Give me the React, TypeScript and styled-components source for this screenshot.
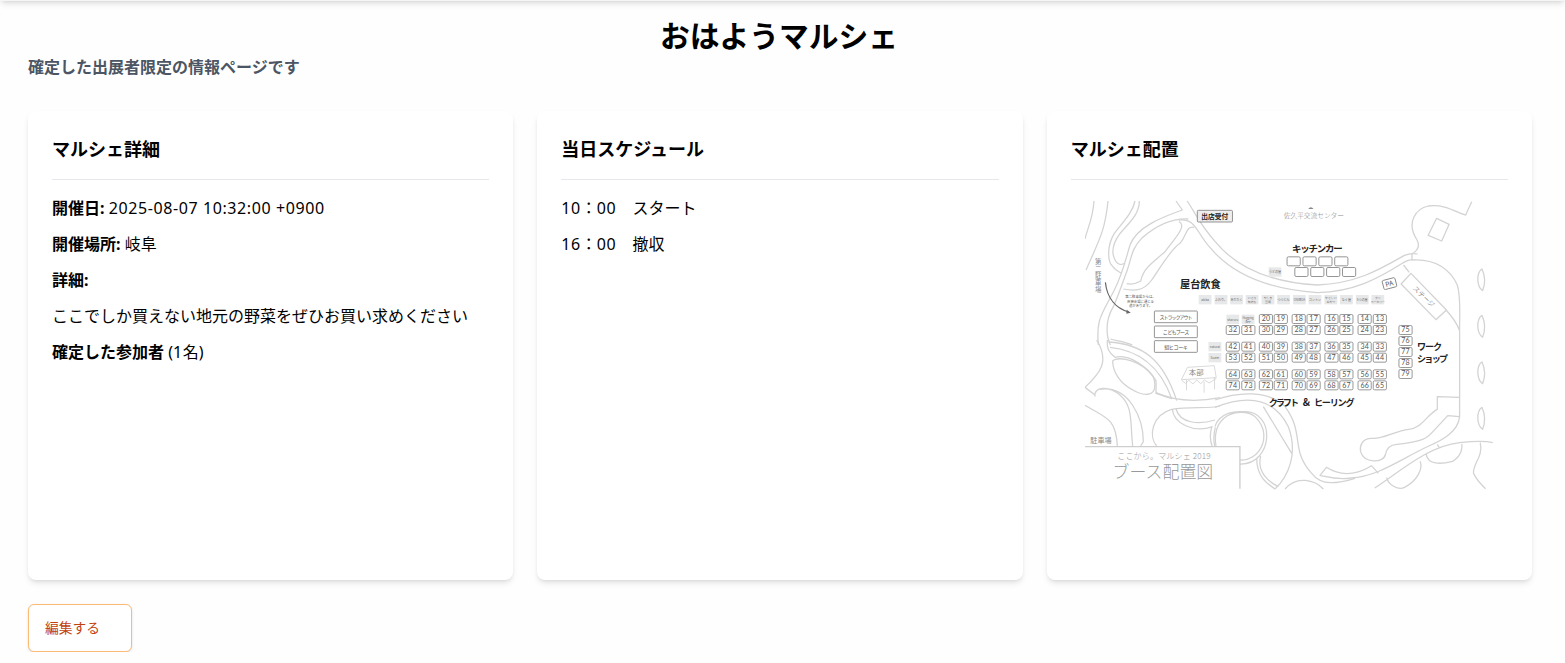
import React from "react";
import styled, { createGlobalStyle } from "styled-components";

const font = `"Noto Sans", "Noto Sans CJK JP", sans-serif`;
const Global = createGlobalStyle`
  * { box-sizing: border-box; }
  body { margin: 0; background: #fefefe; font-family: ${font}; color: #000; overflow: hidden; }
  h1, h2, p { margin: 0; }
`;
const HeaderEdge = styled.header`
  height: 21px;
  margin-top: -20px;
  background: #f5f5f5;
  box-shadow: 0 4px 6px -1px rgba(0, 0, 0, 0.1), 0 2px 4px -2px rgba(0, 0, 0, 0.1);
`;
const Screen = styled.div`
  display: flow-root;
`;
const Page = styled.main`
  padding: 15px 33px 0 28px;
`;
const Title = styled.h1`
  font: 700 29.75px/36px "Noto Sans CJK JP", sans-serif;
  text-align: center;
  padding-right: 2px;
`;
const Lead = styled.p`
  font: 700 16px/24px "Noto Sans CJK JP", sans-serif;
  color: #4b5563;
  margin-top: 2px;
`;
const Cards = styled.section`
  display: grid;
  grid-template-columns: repeat(3, 1fr);
  gap: 24px;
  height: 469px;
  margin: 33px 0 24px;
`;
const Card = styled.article`
  background: #fff;
  border-radius: 8px;
  padding: 23px 24px 24px;
  box-shadow: 0 4px 6px -1px rgba(0, 0, 0, 0.1), 0 2px 4px -2px rgba(0, 0, 0, 0.1);
`;
const CardTitle = styled.h2`
  font: 700 18px/28px "Noto Sans CJK JP", sans-serif;
  padding-bottom: 17px;
  border-bottom: 1px solid #e5e7eb;
  margin-bottom: 16px;
`;
const Row = styled.p`
  font-size: 16px;
  line-height: 24px;
  margin-bottom: 12px;
  white-space: nowrap;
`;
const Label = styled.strong`
  font-weight: 700;
`;
const Latin = styled.span`
  letter-spacing: 0.6px;
`;
const EditButton = styled.button`
  display: block;
  width: 104px;
  height: 48px;
  padding: 0 16px 2px;
  text-align: left;
  font: 400 13.75px/20px "Noto Sans CJK JP", sans-serif;
  color: #c2410c;
  background: #fff;
  border: 1px solid #fdba74;
  border-radius: 6px;
  box-shadow: 0 1px 3px rgba(0, 0, 0, 0.1), 0 1px 2px -1px rgba(0, 0, 0, 0.1);
`;
const MapSvg = styled.svg`
  display: block;
  width: 410px;
  height: 290px;
  margin: 20px auto 0 14px;
  font-family: "Noto Sans CJK JP", sans-serif;
  text-anchor: middle;
`;
const Lines = styled.g`
  fill: none;
  stroke: #d3d3d3;
  stroke-width: 3.8;
  stroke-linejoin: round;
`;

const columns = [600, 646, 698, 742, 795, 839, 892, 936, 990, 1035];
const boothRows: [number, string[]][] = [
  [657, ["", "", "20", "19", "18", "17", "16", "15", "14", "13"]],
  [690, ["32", "31", "30", "29", "28", "27", "26", "25", "24", "23"]],
  [740, ["42", "41", "40", "39", "38", "37", "36", "35", "34", "33"]],
  [773, ["53", "52", "51", "50", "49", "48", "47", "46", "45", "44"]],
  [823, ["64", "63", "62", "61", "60", "59", "58", "57", "56", "55"]],
  [856, ["74", "73", "72", "71", "70", "69", "68", "67", "66", "65"]],
];
const stalls: [number, number, string[]][] = [
  [518, 599, ["akiba"]],
  [565, 599, ["ふわり。"]],
  [611, 599, ["あだたく"]],
  [657, 599, ["いさり", "気持ち"]],
  [704, 599, ["やしま", "豆腐"]],
  [750, 599, ["つつじん"]],
  [797, 599, ["ONIBOA"]],
  [843, 599, ["コンミン"]],
  [890, 599, ["やさしい", "おやつ"]],
  [936, 599, ["なぐ屋"]],
  [983, 599, ["5つの屋"]],
  [1029, 599, ["クリ", "ベーカリー"]],
  [725, 516, ["うどの屋"]],
  [600, 658, ["sharuru"]],
  [645, 658, ["Hugging", "Bee"]],
  [547, 740, ["natural"]],
  [547, 773, ["Suzier"]],
];
const trucks = [
  [780, 484], [827, 484], [874, 484], [921, 484],
  [803, 516], [850, 516], [897, 516], [944, 516],
];

const Booth = ({ x, y, n }: { x: number; y: number; n: string }) => (
  <g>
    <rect x={x - 19.5} y={y - 13.5} width="39" height="27" rx="4" fill="#fff" stroke="#808080" strokeWidth="2.4" />
    {n && <text x={x} y={y + 7.5} fontSize="21" fill="#555" fontFamily="Lato" textLength="25">{n}</text>}
  </g>
);

const BoothMap = () => (
  <MapSvg viewBox="162.7 300 1213 870" preserveAspectRatio="none">
    <Lines transform="scale(.9862 1) translate(150 285)">
      <path d="M42 18C38 75 22 100 15 132M84 18C75 110 55 140 18 225" />
      <path d="M165 18C158 52 130 80 103 115C77 158 85 205 98 214C108 228 115 230 123 234" />
      <path d="M178 18C178 60 145 85 118 118C92 155 95 180 108 200C115 209 126 210 134 205" />
      <path d="M288 18L307 45C250 65 170 95 150 150C135 200 128 235 103 285C65 360 48 370 55 450" />
      <path d="M325 72C280 70 230 90 185 130C153 162 155 190 140 230C125 270 120 290 100 335C82 365 78 400 84 430L91 450" />
      <path d="M297 80C322 92 285 130 255 170C215 205 190 220 182 258C162 270 150 268 140 266" />
      <path d="M342 97C318 92 322 120 300 145C270 165 240 220 215 255C190 290 160 288 130 282" />
      <path d="M91 432C115 438 135 440 157 450" />
    </Lines>
    <Lines>
      <path d="M465 303C490 340 500 370 548 425C620 515 730 548 850 555C970 550 1040 505 1108 466Q1126 458 1147 462" />
      <path d="M440 360C492 355 490 395 533 443C600 525 710 568 850 578C960 575 1030 535 1098 492Q1120 478 1130 480C1200 475 1245 510 1264 555C1276 590 1270 650 1271 700V950C1267 995 1220 1020 1180 1038C1100 1075 1030 1130 950 1134C905 1140 880 1130 858 1126L877 1102C935 1140 990 1110 1010 1097L1031 1120" />
      <path d="M1130 480V462Q1158 445 1145 420C1110 365 1145 325 1178 318C1230 310 1268 342 1289 345Q1295 330 1307 305" />
      <path d="M1203 355L1240 373L1218 423L1178 406ZM1127 520L1232 630L1201 659L1098 552ZM1105 495L1122 517M1231 630Q1262 665 1270 690" />
      {[539, 679, 818, 955].map((y) => (
        <path key={y} d={`M1337 ${y - 33}C1320 ${y - 20} 1321 ${y + 20} 1339 ${y + 33}Q1352 ${y} 1337 ${y - 33}`} />
      ))}
      <path d="M1271 892L1205 890V928C1175 943 1160 985 1120 988C1080 993 1040 1020 1010 1015C982 1015 975 1038 978 1055C988 1090 1045 1090 1051 1065Q1056 1035 1085 1033C1140 1028 1170 1020 1187 1000L1236 947L1271 950" />
      <path d="M1020 1164C1100 1110 1180 1038 1271 1028Q1340 1020 1369 1028M1205 1033L1212 1045M1172 1063C1178 1095 1215 1093 1250 1084C1275 1070 1280 1045 1277 1032M1055 1133C1060 1155 1090 1172 1108 1162C1145 1143 1164 1105 1154 1084" />
      <path d="M1332 1028C1342 1070 1310 1090 1312 1120Q1325 1145 1348 1166" />
    </Lines>
    <Lines transform="scale(.9862 1) translate(150 720)">
      <path d="M50 0C90 65 60 100 15 142L45 165M15 196C80 235 108 235 112 318" />
      <path d="M45 170C40 140 85 135 120 165C160 200 150 245 158 318M60 148C150 135 190 240 190 305L182 318M230 318C205 290 215 225 275 208C330 198 385 208 420 198" />
      <path d="M82 0C80 28 88 38 105 52C150 40 205 85 228 122V160L275 176C240 75 170 30 90 22M85 6C190 12 250 60 290 182" />
      <path d="M98 63C115 45 190 65 220 110C240 175 190 170 155 148C120 130 98 95 98 63ZM228 158C280 182 340 188 420 173" />
      <path d="M277 207C280 250 340 280 398 260M288 207C300 250 355 255 405 240M395 262C388 285 390 300 396 318M406 262C400 285 400 300 404 318" />
    </Lines>
    <Lines transform="scale(.9862 1) translate(555 720)">
      <path d="M0 180C70 155 160 150 210 200C270 280 225 330 290 400C320 440 370 430 420 415" />
      <path d="M0 202C105 160 180 180 220 260C250 340 220 410 180 447M145 200L230 340" />
      <path d="M3 320C-15 210 95 200 125 235C175 290 130 365 75 360M75 372C175 375 185 210 85 215C10 210 0 260 0 260" />
      <path d="M125 355C125 410 155 430 180 447M137 348C125 395 160 425 190 440M210 447C245 405 300 420 325 447" />
    </Lines>
    <path d="M163 1040H621V1166" fill="none" stroke="#cecece" strokeWidth="4" />
    <path d="M466 802L545 797L551 833L448 839ZM463 839V871M515 845V878M546 833V868M448 840L460 850L470 841L482 852L493 840L505 851L516 840L530 849L551 835" fill="none" stroke="#d3d3d3" strokeWidth="2.5" />

    <g fill="#fff" stroke="#808080" strokeWidth="2.5">
      {trucks.map(([x, y]) => <rect key={`${x}-${y}`} x={x - 19.5} y={y - 13.5} width="39" height="27" rx="4" />)}
      {[650, 695, 739].map((y) => <rect key={y} x="368" y={y - 17} width="127" height="35" rx="2" />)}
      <rect x="495" y="331" width="104" height="35" rx="3" fill="#eee" />
      <rect x="1044" y="537" width="39" height="28" rx="4" transform="rotate(-15 1063 551)" />
    </g>
    {boothRows.map(([y, nums]) => nums.map((n, i) => n && <Booth key={n} x={columns[i]} y={y} n={n} />))}
    {["75", "76", "77", "78", "79"].map((n, i) => <Booth key={n} x={1111} y={690 + i * 33} n={n} />)}
    {stalls.map(([x, y, lines]) => (
      <g key={lines[0]}>
        <rect x={x - 19} y={y - 14} width="38" height="28" fill="#e7e8e9" />
        {lines.map((t, i) => (
          <text key={t} x={x} y={y + 4 + (lines.length > 1 ? i * 11 - 5 : 0)} fontSize={lines.length > 1 ? 8.5 : 9} fill="#666">{t}</text>
        ))}
      </g>
    ))}
    <g fill="#222" fontWeight="700">
      <text x="547" y="356" fontSize="20">出店受付</text>
      <text x="504" y="563" fontSize="30">屋台飲食</text>
      <text x="850" y="457" fontSize="28" textLength="150">キッチンカー</text>
      <text x="751" y="917" fontSize="27" textLength="90">クラフト</text>
      <text x="818" y="917" fontSize="29">&amp;</text>
      <text x="900" y="917" fontSize="27" textLength="120">ヒーリング</text>
      <text x="1182" y="751" fontSize="27" textLength="74">ワーク</text>
      <text x="1191" y="785" fontSize="27" textLength="92">ショップ</text>
    </g>
    <g fill="#555">
      <text x="432" y="657" fontSize="15" textLength="98">ストラックアウト</text>
      <text x="432" y="701" fontSize="15" textLength="78">こどもブース</text>
      <text x="432" y="746" fontSize="15" textLength="70">組ヒコーキ</text>
      <text x="1063" y="558" fontSize="20" transform="rotate(-15 1063 551)">PA</text>
      <g fontSize="10">
        <text x="327" y="594">第二駐車場からは、</text>
        <text x="327" y="608">直接会場に通じる</text>
        <text x="327" y="622">道があります。</text>
      </g>
    </g>
    <g fill="#888">
      <text x="840" y="355" fontSize="20" textLength="178" fontWeight="300">佐久平交流センター</text>
      <path d="M823 327Q831 316 839 327Z" />
      <text x="1165" y="597" fontSize="20" textLength="80" transform="rotate(44 1165 590)">ステージ</text>
      <text x="492" y="825" fontSize="22">本部</text>
      <text x="210" y="1029" fontSize="21">駐車場</text>
      {[..."第二駐車場"].map((c, i) => <text key={c} x="202" y={492 + i * 21} fontSize="19">{c}</text>)}
    </g>
    <g fill="#999">
      <text x="396" y="1078" fontSize="24" textLength="276" fontWeight="300">ここから。マルシェ 2019</text>
      <text x="393" y="1134" fontSize="50" textLength="298" fontWeight="300">ブース配置図</text>
    </g>
    <path d="M223 547C228 595 255 625 292 636" fill="none" stroke="#666" strokeWidth="3.5" />
    <path d="M298 638L286 629L285 641Z" fill="#666" />
  </MapSvg>
);

export default function App() {
  return (
    <Screen>
      <Global />
      <HeaderEdge />
      <Page>
        <Title>おはようマルシェ</Title>
        <Lead>確定した出展者限定の情報ページです</Lead>
        <Cards>
          <Card>
            <CardTitle>マルシェ詳細</CardTitle>
            <Row><Label>開催日:</Label> <Latin>2025-08-07 10:32:00 +0900</Latin></Row>
            <Row><Label>開催場所:</Label> 岐阜</Row>
            <Row><Label>詳細:</Label></Row>
            <Row>ここでしか買えない地元の野菜をぜひお買い求めください</Row>
            <Row><Label>確定した参加者</Label> (<Latin>1</Latin>名)</Row>
          </Card>
          <Card>
            <CardTitle>当日スケジュール</CardTitle>
            <Row><Latin>10</Latin>：<Latin>00</Latin>　スタート</Row>
            <Row><Latin>16</Latin>：<Latin>00</Latin>　撤収</Row>
          </Card>
          <Card>
            <CardTitle>マルシェ配置</CardTitle>
            <BoothMap />
          </Card>
        </Cards>
        <EditButton>編集する</EditButton>
      </Page>
    </Screen>
  );
}
